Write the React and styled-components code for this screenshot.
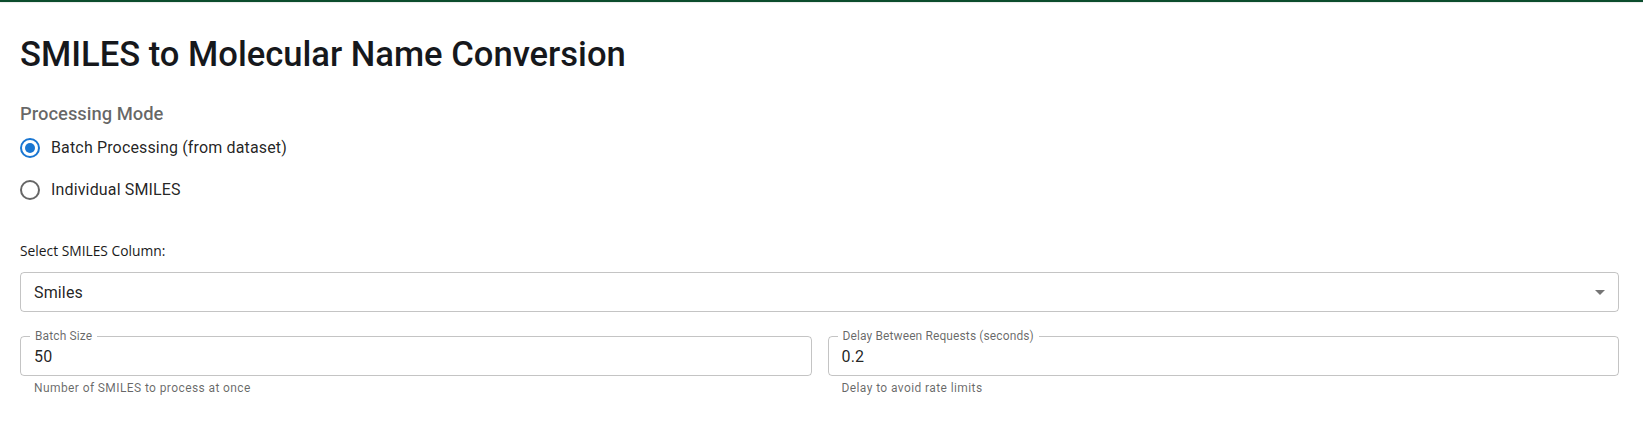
import React from 'react';
import styled, { createGlobalStyle } from 'styled-components';

const GlobalStyle = createGlobalStyle`
  html, body {
    margin: 0;
    padding: 0;
    background: #ffffff;
  }
  body {
    font-family: Roboto, "Liberation Sans", Arial, sans-serif;
    color: rgba(0, 0, 0, 0.87);
  }
`;

const TopRule = styled.div`
  height: 2px;
  background: #0b4d2d;
  box-shadow: 0 1px 1px rgba(0, 0, 0, 0.08);
`;

const Page = styled.main`
  padding: 31px 24px 20px 20px;
`;

const Title = styled.h1`
  margin: 0;
  font-size: 34.6px;
  font-weight: 500;
  line-height: 42px;
  color: #16181c;
  letter-spacing: 0;
`;

const ModeLabel = styled.div`
  margin-top: 25px;
  font-size: 18.4px;
  font-weight: 500;
  line-height: 27px;
  color: rgba(0, 0, 0, 0.6);
`;

const RadioGroup = styled.div`
  display: flex;
  flex-direction: column;
`;

const RadioRow = styled.label`
  display: flex;
  align-items: center;
  height: 42px;
  cursor: pointer;
  font-size: 16px;
  line-height: 1.5;
  letter-spacing: 0.00938em;
  color: rgba(0, 0, 0, 0.87);
`;

const RadioIcon = styled.span`
  box-sizing: border-box;
  width: 20px;
  height: 20px;
  margin-right: 11px;
  border-radius: 50%;
  border: 2px solid ${p => (p.$checked ? '#1976d2' : 'rgba(0, 0, 0, 0.6)')};
  display: flex;
  align-items: center;
  justify-content: center;

  &::after {
    content: '';
    width: 10px;
    height: 10px;
    border-radius: 50%;
    background: #1976d2;
    display: ${p => (p.$checked ? 'block' : 'none')};
  }
`;

const ColumnLabel = styled.label`
  display: block;
  margin-top: 30px;
  margin-bottom: 11px;
  font-family: "Open Sans", "Noto Sans", sans-serif;
  font-size: 13.8px;
  line-height: 20px;
  letter-spacing: 0;
  color: #1a1a1a;
`;

const Outlined = styled.div`
  position: relative;
  box-sizing: border-box;
  height: 40px;
  border: 1px solid rgba(0, 0, 0, 0.23);
  border-radius: 4px;
  display: flex;
  align-items: center;
  padding: 0 13px;
  font-size: 16px;
  letter-spacing: 0.00938em;
  color: rgba(0, 0, 0, 0.87);
`;

const Value = styled.span`
  flex: 1;
`;

const Caret = styled.svg`
  width: 24px;
  height: 24px;
  margin-right: -7px;
  fill: rgba(0, 0, 0, 0.54);
`;

const FieldRow = styled.div`
  display: grid;
  grid-template-columns: 1fr 1fr;
  gap: 16px;
  margin-top: 24px;
`;

const Field = styled.div`
  display: flex;
  flex-direction: column;
`;

const FloatLabel = styled.span`
  position: absolute;
  left: 9px;
  top: -9px;
  padding: 0 5px;
  background: #fff;
  font-size: 12px;
  line-height: 16px;
  letter-spacing: 0.00938em;
  color: rgba(0, 0, 0, 0.6);
`;

const Helper = styled.p`
  margin: 3px 14px 0;
  font-size: 12px;
  line-height: 1.66;
  letter-spacing: 0.03333em;
  color: rgba(0, 0, 0, 0.6);
`;

const modes = [
  { id: 'batch', label: 'Batch Processing (from dataset)' },
  { id: 'single', label: 'Individual SMILES' },
];

const fields = [
  { label: 'Batch Size', value: '50', help: 'Number of SMILES to process at once' },
  { label: 'Delay Between Requests (seconds)', value: '0.2', help: 'Delay to avoid rate limits' },
];

export default function App() {
  const [mode, setMode] = React.useState('batch');

  return (
    <>
      <GlobalStyle />
      <TopRule />
      <Page>
        <Title>SMILES to Molecular Name Conversion</Title>

        <ModeLabel>Processing Mode</ModeLabel>
        <RadioGroup>
          {modes.map(m => (
            <RadioRow key={m.id} onClick={() => setMode(m.id)}>
              <RadioIcon $checked={mode === m.id} />
              {m.label}
            </RadioRow>
          ))}
        </RadioGroup>

        <ColumnLabel>Select SMILES Column:</ColumnLabel>
        <Outlined>
          <Value>Smiles</Value>
          <Caret viewBox="0 0 24 24">
            <path d="M7 10l5 5 5-5z" />
          </Caret>
        </Outlined>

        <FieldRow>
          {fields.map(f => (
            <Field key={f.label}>
              <Outlined>
                <FloatLabel>{f.label}</FloatLabel>
                <Value>{f.value}</Value>
              </Outlined>
              <Helper>{f.help}</Helper>
            </Field>
          ))}
        </FieldRow>
      </Page>
    </>
  );
}
